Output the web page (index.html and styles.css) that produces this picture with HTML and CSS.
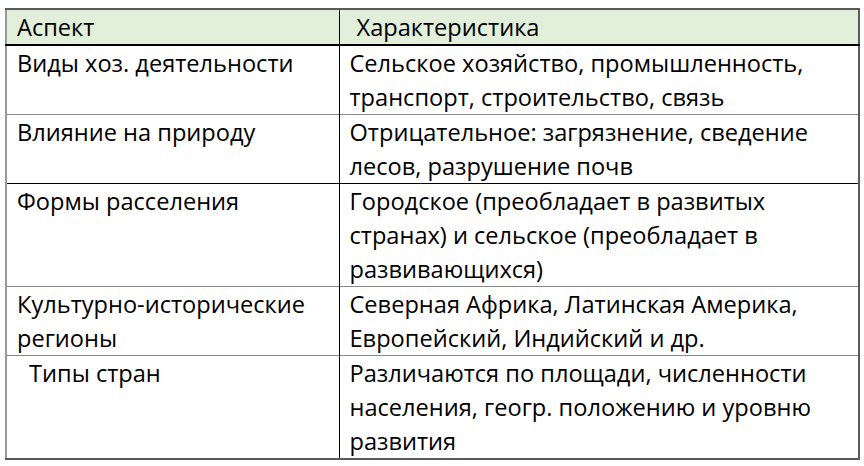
FILE: index.html
```html
<!DOCTYPE html>
<html lang="ru">
<head>
<meta charset="utf-8">
<link rel="stylesheet" href="styles.css">
</head>
<body>
<table class="tbl">
  <colgroup><col class="c1"><col class="c2"></colgroup>
  <tr class="head"><td>Аспект</td><td class="h2">Характеристика</td></tr>
  <tr class="r dark"><td>Виды хоз. деятельности</td><td>Сельское хозяйство, промышленность,<br>транспорт, строительство, связь</td></tr>
  <tr class="r"><td>Влияние на природу</td><td>Отрицательное: загрязнение, сведение<br>лесов, разрушение почв</td></tr>
  <tr class="r dark"><td>Формы расселения</td><td>Городское (преобладает в развитых<br>странах) и сельское (преобладает в<br>развивающихся)</td></tr>
  <tr class="r"><td>Культурно-исторические<br>регионы</td><td>Северная Африка, Латинская Америка,<br>Европейский, Индийский и др.</td></tr>
  <tr class="r last"><td class="ind">Типы стран</td><td>Различаются по площади, численности<br>населения, геогр. положению и уровню<br>развития</td></tr>
</table>
</body>
</html>
```
FILE: styles.css
```css
html, body { margin: 0; padding: 0; background: #ffffff; }
body { padding: 8px 0 0 5px; }
.tbl {
  border-collapse: collapse;
  width: 853px;
  table-layout: fixed;
  font-family: "Open Sans", "Noto Sans", sans-serif;
  font-size: 23.6px;
  line-height: 34px;
  color: #000;
  border-top: 2px solid #5a5a5a;
  border-left: 2px solid #9a9a9a;
  border-right: 2px solid #5a5a5a;
  border-bottom: 2px solid #5a5a5a;
}
.c1 { width: 333px; }
.c2 { width: 520px; }
.tbl td {
  vertical-align: top;
  padding: 0 0 0 10px;
  border-top: 1px solid #8a8a8a;
  white-space: nowrap;
  overflow: hidden;
}
.tbl td:first-child { border-right: 1.5px solid #000; }
.tbl tr.dark td { border-top-color: #000; }
.head td {
  background: #e2efda;
  height: 34px;
  line-height: 34px;
  border-top: none;
}
.tbl .head .h2 { padding-left: 17px; }
.head + tr td { border-top: 2px solid #555; }
.tbl td.ind { padding-left: 22px; }
```
